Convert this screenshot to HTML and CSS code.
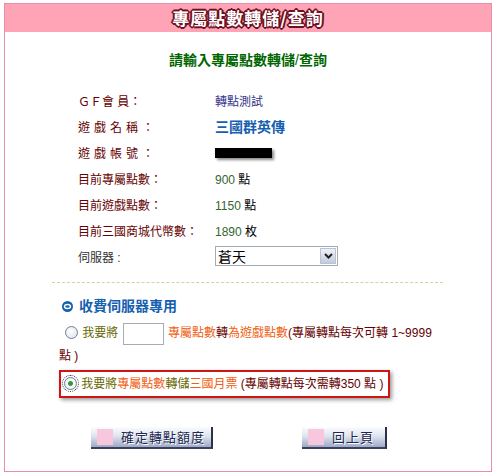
FILE: index.html
```html
<!DOCTYPE html>
<html lang="zh-Hant">
<head>
    <meta charset="UTF-8">
    <title>專屬點數轉儲/查詢</title>
    <link rel="stylesheet" href="styles.css">
</head>
<body>
    <div class="frame">
        <div class="title-bar">專屬點數轉儲/查詢</div>

        <div class="subtitle">請輸入專屬點數轉儲<span class="slash">/</span>查詢</div>

        <div class="info">
            <div class="label">ＧＦ會 員：</div>
            <div class="value navy">轉點測試</div>

            <div class="label spaced">遊戲名稱：</div>
            <div class="value game">三國群英傳</div>

            <div class="label spaced">遊戲帳號：</div>
            <div class="value"><span class="redacted"></span></div>

            <div class="label">目前專屬點數：</div>
            <div class="value"><span class="num">900</span> 點</div>

            <div class="label">目前遊戲點數：</div>
            <div class="value"><span class="num">1150</span> 點</div>

            <div class="label">目前三國商城代幣數：</div>
            <div class="value"><span class="num">1890</span> 枚</div>

            <div class="label grey">伺服器 :</div>
            <div class="value">
                <div class="select">
                    <span class="select-text">蒼天</span>
                    <span class="select-arrow">
                        <svg width="9" height="6" viewBox="0 0 9 6"><path d="M1 1 L4.5 4.5 L8 1" fill="none" stroke="#222" stroke-width="2"/></svg>
                    </span>
                </div>
            </div>
        </div>

        <div class="divider"></div>

        <div class="section">
            <div class="section-title">
                <svg class="bullet" width="11" height="11" viewBox="0 0 11 11">
                    <circle cx="5.5" cy="5.5" r="5.5" fill="#1560b0"/>
                    <ellipse cx="5.5" cy="5.5" rx="3" ry="2" fill="none" stroke="#fff" stroke-width="1.4"/>
                </svg>
                收費伺服器專用
            </div>

            <div class="option">
                <input type="radio" name="mode" class="radio">
                <span class="olive">我要將</span>
                <input type="text" class="amount">
                <span class="orange">專屬點數</span><span class="maroon">轉</span><span class="orange">為遊戲點數</span><span class="maroon">(專屬轉點每次可轉 1~9999<br>點 )</span>
            </div>

            <div class="option picked">
                <input type="radio" name="mode" class="radio" checked>
                <span class="olive">我要將</span><span class="orange">專屬點數</span><span class="olive">轉儲</span><span class="orange">三國月票</span>
                <span class="maroon">(專屬轉點每次需轉350 點 )</span>
            </div>
        </div>

        <div class="buttons">
            <button class="btn wide"><span class="btn-icon"></span>確定轉點額度</button>
            <button class="btn"><span class="btn-icon"></span>回上頁</button>
        </div>
    </div>
</body>
</html>
```

FILE: styles.css
```css
body {
    margin: 3px 0 0 4px;
    font-family: "Liberation Sans", "Noto Sans CJK TC", sans-serif;
    font-size: 12px;
    background-color: #fff;
}

.frame {
    width: 488px;
    height: 469px;
    box-sizing: border-box;
    border: 1px solid #e78eab;
}

.title-bar {
    height: 28px;
    line-height: 28px;
    background-color: #ffa3b6;
    text-align: center;
    color: #fff;
    font-family: "Noto Sans CJK TC", sans-serif;
    font-size: 17px;
    font-weight: bold;
    letter-spacing: 1px;
    text-shadow:
        1px 0 0 #6e1020, -1px 0 0 #6e1020, 0 1px 0 #6e1020, 0 -1px 0 #6e1020,
        1px 1px 0 #6e1020, -1px -1px 0 #6e1020, 1px -1px 0 #6e1020, -1px 1px 0 #6e1020,
        2px 0 0 #6e1020, -2px 0 0 #6e1020, 0 2px 0 #6e1020, 0 -2px 0 #6e1020;
}

.subtitle {
    margin-top: 18px;
    line-height: 20px;
    text-align: center;
    color: #006600;
    font-size: 14px;
    font-weight: bold;
}

.subtitle .slash {
    font-weight: normal;
}

.info {
    display: grid;
    grid-template-columns: 137px 1fr;
    grid-auto-rows: 26px;
    align-items: center;
    margin-top: 17px;
    padding-left: 73px;
}

.label {
    color: #660000;
}

.label.spaced {
    letter-spacing: 4px;
}

.label.grey {
    color: #333;
}

.navy {
    color: #333388;
}

.game {
    color: #1560b0;
    font-size: 14px;
    font-weight: bold;
}

.num {
    color: #336633;
}

.redacted {
    display: inline-block;
    width: 57px;
    height: 10px;
    background-color: #000;
    box-shadow: 2px 2px 3px #888;
    vertical-align: middle;
}

.select {
    display: flex;
    align-items: center;
    width: 123px;
    height: 20px;
    box-sizing: border-box;
    border: 1px solid #a5acb2;
    background-color: #fff;
}

.select-text {
    flex: 1;
    padding-left: 2px;
    font-size: 14px;
    color: #000;
}

.select-arrow {
    display: flex;
    align-items: center;
    justify-content: center;
    width: 16px;
    height: 16px;
    margin-right: 1px;
    border: 1px solid #b9c3d6;
    box-sizing: border-box;
    background: linear-gradient(#eef1f7, #c3cbdc);
}

.divider {
    margin: 13px 0 0 47px;
    width: 391px;
    border-top: 1px dashed #c3dd98;
}

.section {
    padding-left: 54px;
}

.section-title {
    display: flex;
    align-items: center;
    gap: 6px;
    margin-top: 13px;
    padding-left: 3px;
    line-height: 20px;
    color: #1560b0;
    font-size: 14px;
    font-weight: bold;
}

.option {
    margin-top: 6px;
    line-height: 22px;
}

.olive {
    color: #666600;
}

.orange {
    color: #f06010;
}

.maroon {
    color: #660000;
}

.radio {
    appearance: none;
    width: 13px;
    height: 13px;
    margin: 0 1px 0 6px;
    border: 1px solid #6f7f95;
    border-radius: 50%;
    background: radial-gradient(circle at 40% 40%, #fff, #dcdfe6);
    vertical-align: -2px;
}

.radio:checked {
    background: radial-gradient(circle, #2f9b3a 0, #2f9b3a 2px, #fff 3px, #dcdfe6);
    outline: 1px dotted #333;
    outline-offset: 1px;
}

.amount {
    width: 41px;
    height: 22px;
    box-sizing: border-box;
    margin: 0 1px;
    border: 1px solid #a5acb5;
    vertical-align: middle;
}

.option.picked {
    width: 331px;
    height: 28px;
    box-sizing: border-box;
    margin-top: 3px;
    border: 2px solid #cc1515;
    box-shadow: 2px 2px 4px #999;
    line-height: 24px;
}

.option.picked .radio {
    margin-left: 3px;
}

.buttons {
    display: flex;
    gap: 89px;
    margin-top: 29px;
    padding-left: 86px;
}

.btn {
    display: flex;
    align-items: center;
    gap: 8px;
    width: 85px;
    height: 22px;
    box-sizing: border-box;
    padding: 0 0 0 6px;
    border: none;
    border-right: 2px solid #2c3048;
    border-bottom: 2px solid #3b4260;
    background: linear-gradient(#fbfcfe, #dfe4ee 45%, #9ea9c6);
    color: #1c2850;
    font-family: "Noto Sans CJK TC", sans-serif;
    font-size: 13px;
    letter-spacing: 1px;
    text-shadow: 1px 1px 0 #fff;
    cursor: pointer;
}

.btn.wide {
    width: 122px;
}

.btn-icon {
    width: 16px;
    height: 16px;
    background-color: #f8c6dd;
}
```
